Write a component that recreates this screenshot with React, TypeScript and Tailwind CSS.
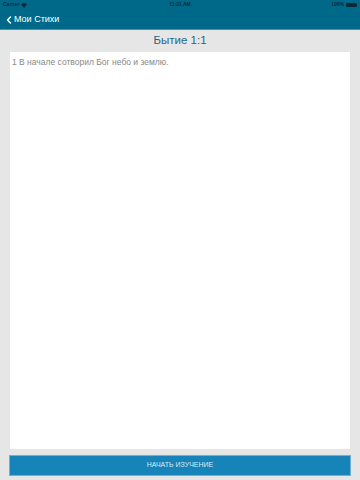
import { ChevronLeft } from "lucide-react";

export default function App() {
  return (
    <div
      className="w-[360px] h-[480px] flex flex-col bg-[#e6e6e6] overflow-hidden"
      style={{ fontFamily: '"Liberation Sans", Arial, sans-serif' }}
    >
      {/* Status + nav bar */}
      <div className="h-[30px] bg-[#00698a] flex flex-col border-b border-[#5b8a9c]">
        <div className="h-[10px] px-[3px] flex items-center justify-between text-[5px] font-bold text-[#0a2a36]">
          <div className="flex items-center gap-[2px] w-[60px]">
            <span>Carrier</span>
            <svg width="6" height="5" viewBox="0 0 12 9">
              <path d="M6 9 L0 2.5 A9 9 0 0 1 12 2.5 Z" fill="#0a2a36" />
            </svg>
          </div>
          <span>11:21 AM</span>
          <div className="flex items-center justify-end gap-[2px] w-[60px]">
            <span>100%</span>
            <div className="w-[11px] h-[4px] bg-[#0a2a36] rounded-[1px]" />
          </div>
        </div>
        <div className="flex-1 flex items-center px-[3px]">
          <div className="flex items-center text-white text-[9px]">
            <ChevronLeft className="w-[12px] h-[12px] -mr-[1px]" strokeWidth={3} />
            <span>Мои Стихи</span>
          </div>
        </div>
      </div>

      {/* Title */}
      <div className="h-[22px] flex items-center justify-center text-[11.5px] text-[#2a6585]">
        Бытие 1:1
      </div>

      {/* Verse box */}
      <div className="mx-[10px] h-[397px] bg-white px-[2px] py-[4px] text-[8.5px] text-[#888888]">
        1 В начале сотворил Бог небо и землю.
      </div>

      {/* Button */}
      <div className="mx-[9px] mt-[6px] h-[21px] bg-[#1683b9] border border-[#6fb0d4] flex items-center justify-center text-[7px] text-[#d8ecf6]">
        НАЧАТЬ ИЗУЧЕНИЕ
      </div>
    </div>
  );
}
